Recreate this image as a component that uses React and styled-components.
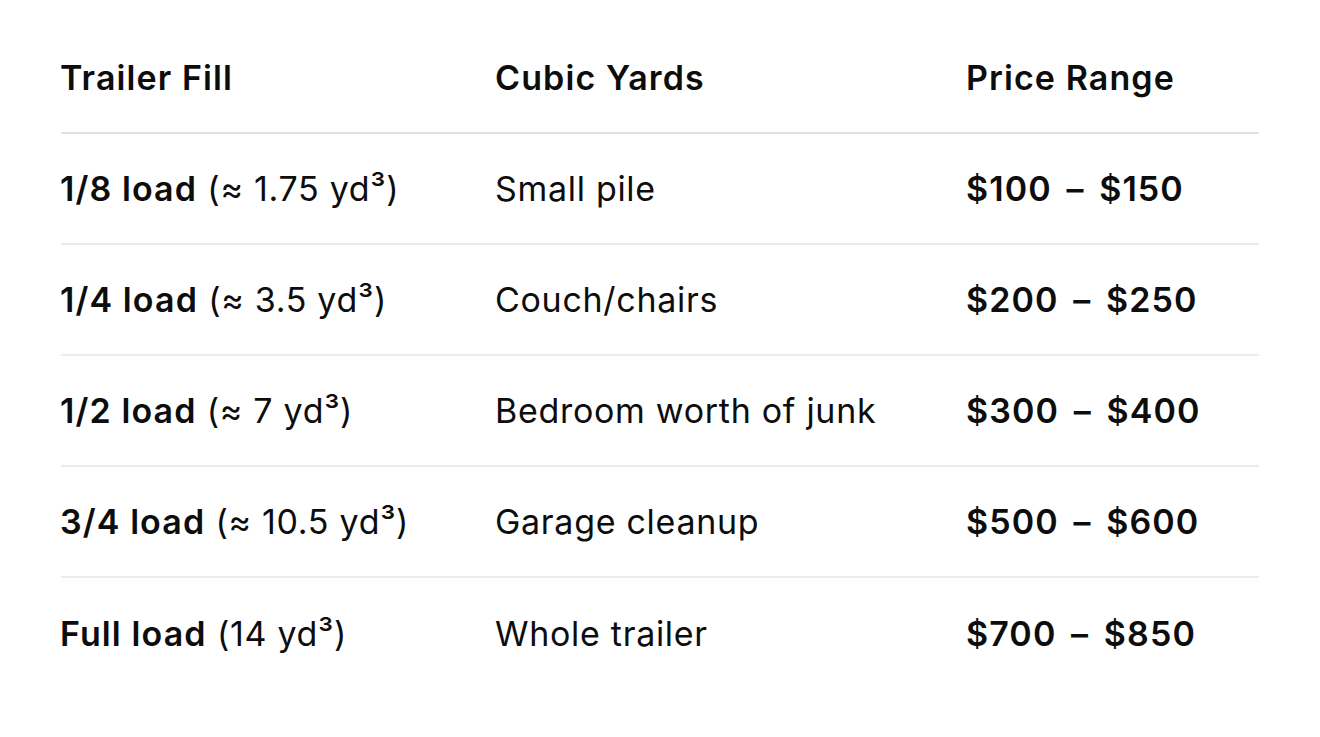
import React from 'react';
import styled, { createGlobalStyle } from 'styled-components';

const rows = [
  { fill: '1/8 load', note: '(≈ 1.75 yd³)', size: 'Small pile', price: '$100 – $150' },
  { fill: '1/4 load', note: '(≈ 3.5 yd³)', size: 'Couch/chairs', price: '$200 – $250' },
  { fill: '1/2 load', note: '(≈ 7 yd³)', size: 'Bedroom worth of junk', price: '$300 – $400' },
  { fill: '3/4 load', note: '(≈ 10.5 yd³)', size: 'Garage cleanup', price: '$500 – $600' },
  { fill: 'Full load', note: '(14 yd³)', size: 'Whole trailer', price: '$700 – $850' },
];

function App() {
  return (
    <>
      <GlobalStyle />
      <Page>
        <Table>
          <HeadRow>
            <Cell><b>Trailer Fill</b></Cell>
            <Cell><b>Cubic Yards</b></Cell>
            <Cell><b>Price Range</b></Cell>
          </HeadRow>
          {rows.map((r, i) => (
            <Row key={r.fill} last={i === rows.length - 1}>
              <Cell><b>{r.fill}</b> {r.note}</Cell>
              <Cell>{r.size}</Cell>
              <Cell><Price>{r.price}</Price></Cell>
            </Row>
          ))}
        </Table>
      </Page>
    </>
  );
}

export default App;

const GlobalStyle = createGlobalStyle`
  html, body {
    margin: 0;
    padding: 0;
    background: #ffffff;
  }
  body {
    font-family: Inter, "Noto Sans", sans-serif;
    color: #0d0d0d;
    -webkit-font-smoothing: antialiased;
  }
`;

const Page = styled.div`
  width: 1320px;
  height: 737px;
  padding: 23px 61px 0 61px;
  box-sizing: border-box;
`;

const Table = styled.div`
  width: 1198px;
  display: flex;
  flex-direction: column;
`;

const Row = styled.div`
  display: grid;
  grid-template-columns: 435px 471px 1fr;
  height: 111px;
  box-sizing: border-box;
  align-items: center;
  border-bottom: ${({ last }) => (last ? 'none' : '2px solid #ececec')};
  font-size: 34px;
  letter-spacing: 0.7px;
  b {
    font-weight: 600;
    letter-spacing: 1.1px;
  }
`;

const HeadRow = styled(Row)`
  border-bottom: 2px solid #e0e0e0;
`;

const Cell = styled.div`
  white-space: nowrap;
  line-height: 1.4;
  margin-left: -1px;
`;

const Price = styled.b`
  word-spacing: 5px;
`;
